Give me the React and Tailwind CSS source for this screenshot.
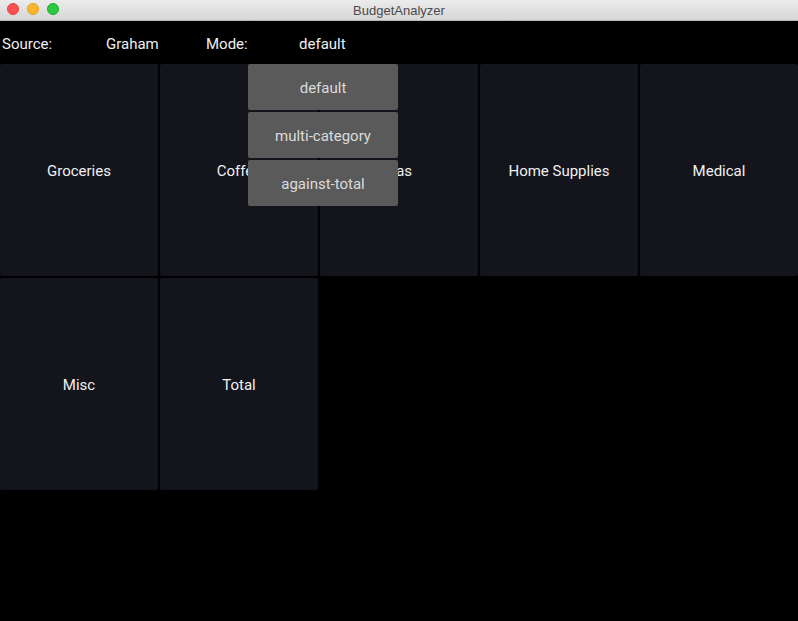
import React from 'react'

const categories = ['Groceries', 'Coffee', 'Gas', 'Home Supplies', 'Medical', 'Misc', 'Total']
const modes = ['default', 'multi-category', 'against-total']

const App = () => {
  return (
    <div className="w-[798px] h-[621px] bg-black overflow-hidden flex flex-col font-['Roboto',sans-serif]">
      {/* title bar */}
      <div className="relative h-[21px] shrink-0 flex items-center justify-center bg-gradient-to-b from-[#ececec] to-[#d6d6d6] border-b border-[#b4b4b4]">
        <div className="absolute left-[7px] top-[3px] flex gap-[8px]">
          <span className="w-[12px] h-[12px] rounded-full bg-[#fc4f4f] border border-[#e0443e]" />
          <span className="w-[12px] h-[12px] rounded-full bg-[#fdb62c] border border-[#dea123]" />
          <span className="w-[12px] h-[12px] rounded-full bg-[#2ac93f] border border-[#1aab29]" />
        </div>
        <span className="text-[13px] text-[#4b4b4b] font-['Liberation_Sans',sans-serif] leading-none">BudgetAnalyzer</span>
      </div>

      {/* source / mode row */}
      <div className="relative h-[43px] shrink-0 flex items-center pl-[2px] pt-[3px] text-[15px] text-[#f0f0f0]">
        <span className="w-[104px]">Source:</span>
        <span className="w-[100px]">Graham</span>
        <span className="w-[93px]">Mode:</span>
        <span>default</span>

        {/* open mode menu */}
        <div className="absolute left-[248px] top-[43px] z-10 w-[150px] flex flex-col gap-[2px]">
          {modes.map((m) => (
            <div key={m} className="h-[46px] pt-[2px] rounded-[2px] bg-[#5a5a5a] flex items-center justify-center text-[15px] text-[#dadada]">
              {m}
            </div>
          ))}
        </div>
      </div>

      {/* category tiles */}
      <div className="grid grid-cols-5 gap-[2px] auto-rows-[212px]">
        {categories.map((c) => (
          <div key={c} className="bg-[#13141c] pt-[3px] rounded-[2px] flex items-center justify-center text-[15px] text-[#f0f0f0]">
            {c}
          </div>
        ))}
      </div>
    </div>
  )
}

export default App
